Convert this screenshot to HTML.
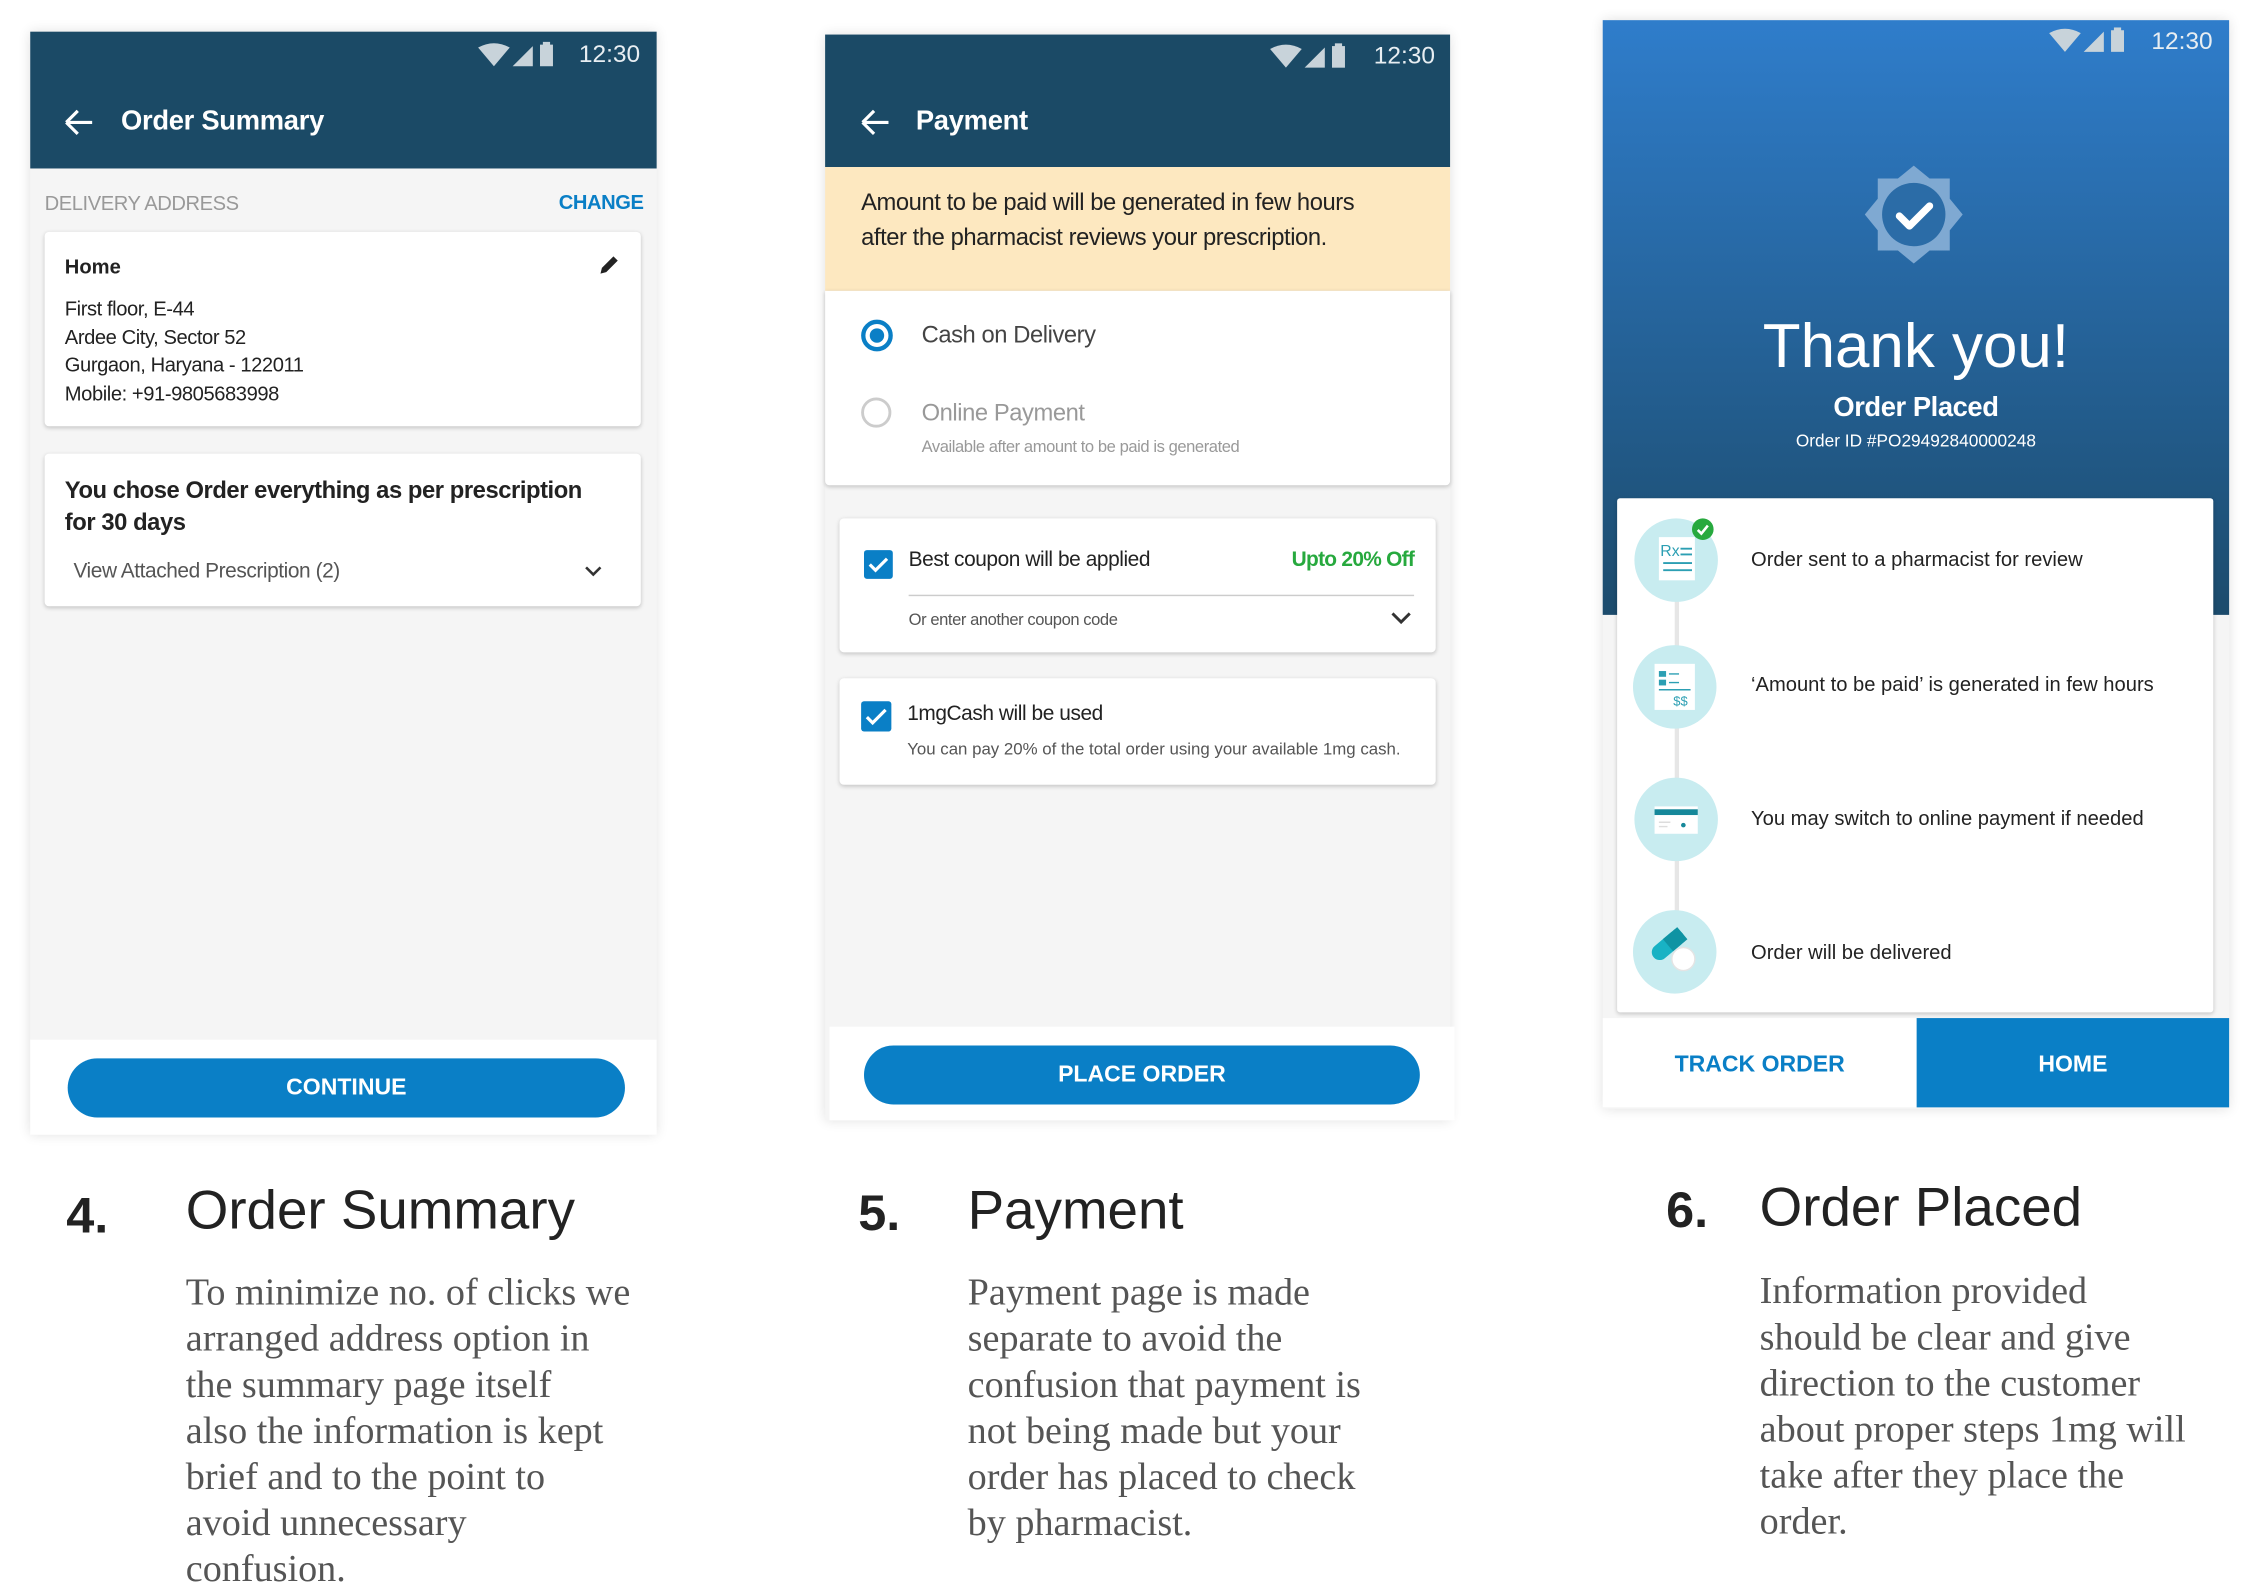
<!DOCTYPE html>
<html><head><meta charset="utf-8"><style>
html,body{margin:0;padding:0;background:#fff;}
body{width:2258px;height:1584px;overflow:hidden;position:relative;}
#s{position:absolute;left:0;top:0;width:1568px;height:1100px;transform:scale(1.44);transform-origin:0 0;font-family:"Liberation Sans",sans-serif;}
.a{position:absolute;white-space:nowrap;}
.ph{position:absolute;background:#f5f5f5;box-shadow:0 0 8px rgba(0,0,0,.12);}
.card{position:absolute;background:#fff;border-radius:3px;box-shadow:0 1px 3px rgba(0,0,0,.2);}
.hd{position:absolute;left:0;right:0;top:0;background:#1b4a66;}
.time{position:absolute;color:#e8eef2;font-size:17px;}
.ttl{position:absolute;color:#fff;font-size:19px;font-weight:bold;letter-spacing:-0.2px;}
.btn{position:absolute;background:#0a7fc6;color:#fff;border-radius:22px;font-size:16px;font-weight:bold;text-align:center;}
.num{position:absolute;font-size:35px;font-weight:bold;color:#222;}
.h{position:absolute;font-size:38px;color:#222;}
.p{position:absolute;font-family:"Liberation Serif",serif;font-size:26.5px;line-height:32px;color:#555;white-space:nowrap;}
.chk{position:absolute;width:20px;height:20px;background:#0a7fc6;border-radius:2px;}
.ic{position:absolute;width:58px;height:58px;border-radius:50%;background:#c8ecf0;}
.st{position:absolute;font-size:14px;color:#222;white-space:nowrap;}
.n{letter-spacing:-0.3px;}
</style></head><body><div id="s">

<svg width="0" height="0" style="position:absolute"><defs>
<g id="sb"><path d="M0 3 Q11 -3 22 3 L11 16Z" fill="#c8d3da"/><path d="M24 16 L38 2 L38 16Z" fill="#c8d3da"/><rect x="43" y="1" width="9" height="15" fill="#c8d3da"/><rect x="45" y="-1" width="5" height="3" fill="#c8d3da"/></g>
<g id="back"><path d="M2 10 H20 M2 10 L10 2 M2 10 L10 18" stroke="#fff" stroke-width="2.2" fill="none"/></g>
</defs></svg>

<!-- Panel 1 -->
<div class="ph" style="left:21px;top:22px;width:435px;height:766px;">
 <div class="hd" style="height:95px;">
  <svg class="a" style="left:311px;top:7px" width="60" height="18"><use href="#sb" y="1"/></svg>
  <div class="time" style="left:381px;top:6px;">12:30</div>
  <svg class="a" style="left:23px;top:53px" width="22" height="20"><use href="#back"/></svg>
  <div class="ttl" style="left:63px;top:52px;">Order Summary</div>
 </div>
 <div class="a n" style="left:10px;top:111px;font-size:14px;color:#999;">DELIVERY ADDRESS</div>
 <div class="a n" style="left:367px;top:110px;font-size:14px;color:#0a7fc6;font-weight:bold;">CHANGE</div>
 <div class="card" style="left:10px;top:139px;width:414px;height:135px;">
  <div class="a" style="left:14px;top:16px;font-size:14px;font-weight:bold;color:#222;">Home</div>
  <svg class="a" style="left:384px;top:15px" width="16" height="16"><path d="M2 14 L3 10 L11 2 L14 5 L6 13Z" fill="#222"/></svg>
  <div class="a n" style="left:14px;top:44px;font-size:14px;line-height:19.5px;color:#222;">First floor, E-44<br>Ardee City, Sector 52<br>Gurgaon, Haryana - 122011<br>Mobile: +91-9805683998</div>
 </div>
 <div class="card" style="left:10px;top:293px;width:414px;height:106px;">
  <div class="a n" style="left:14px;top:15px;font-size:16.5px;line-height:22px;font-weight:bold;color:#222;">You chose Order everything as per prescription<br>for 30 days</div>
  <div class="a n" style="left:20px;top:74px;font-size:14.5px;color:#555;">View Attached Prescription (2)</div>
  <svg class="a" style="left:374px;top:77px" width="14" height="10"><path d="M2 2 L7 7 L12 2" stroke="#333" stroke-width="1.8" fill="none"/></svg>
 </div>
 <div class="a" style="left:0;top:700px;width:435px;height:66px;background:#fff;"></div>
 <div class="btn" style="left:26px;top:713px;width:387px;height:41px;line-height:41px;">CONTINUE</div>
</div>

<!-- Panel 2 -->
<div class="ph" style="left:573px;top:24px;width:434px;height:754px;">
 <div class="hd" style="height:92px;">
  <svg class="a" style="left:309px;top:6px" width="60" height="18"><use href="#sb" y="1"/></svg>
  <div class="time" style="left:381px;top:5px;">12:30</div>
  <svg class="a" style="left:24px;top:51px" width="22" height="20"><use href="#back"/></svg>
  <div class="ttl" style="left:63px;top:50px;">Payment</div>
 </div>
 <div class="a" style="left:0;top:92px;width:434px;height:86px;background:#fde8c0;"></div>
 <div class="a n" style="left:25px;top:105px;font-size:16.5px;line-height:24px;color:#222;">Amount to be paid will be generated in few hours<br>after the pharmacist reviews your prescription.</div>
 <div class="a" style="left:0;top:178px;width:434px;height:135px;background:#fff;box-shadow:0 1px 3px rgba(0,0,0,.2);border-radius:0 0 3px 3px;"></div>
 <div class="a" style="left:25px;top:198px;width:16px;height:16px;border:3px solid #0a7fc6;border-radius:50%;"></div>
 <div class="a" style="left:31px;top:204px;width:10px;height:10px;background:#0a7fc6;border-radius:50%;"></div>
 <div class="a n" style="left:67px;top:200px;font-size:16.5px;color:#444;">Cash on Delivery</div>
 <div class="a" style="left:25px;top:252px;width:17px;height:17px;border:2px solid #ccc;border-radius:50%;"></div>
 <div class="a n" style="left:67px;top:254px;font-size:16.5px;color:#999;">Online Payment</div>
 <div class="a n" style="left:67px;top:281px;font-size:11.5px;color:#999;">Available after amount to be paid is generated</div>
 <div class="card" style="left:10px;top:336px;width:414px;height:93px;">
  <div class="chk" style="left:17px;top:22px;"><svg width="20" height="20"><path d="M4 10 L8 14 L16 6" stroke="#fff" stroke-width="2.2" fill="none"/></svg></div>
  <div class="a n" style="left:48px;top:21px;font-size:14.5px;color:#222;">Best coupon will be applied</div>
  <div class="a n" style="left:314px;top:21px;font-size:14.5px;color:#27a93e;font-weight:bold;letter-spacing:-0.5px;">Upto 20% Off</div>
  <div class="a" style="left:48px;top:53px;width:351px;height:1px;background:#ccc;"></div>
  <div class="a n" style="left:48px;top:65px;font-size:11.5px;color:#555;">Or enter another coupon code</div>
  <svg class="a" style="left:382px;top:64px" width="16" height="12"><path d="M2 2 L8 8 L14 2" stroke="#333" stroke-width="2" fill="none"/></svg>
 </div>
 <div class="card" style="left:10px;top:447px;width:414px;height:74px;">
  <div class="chk" style="left:15px;top:16px;width:21px;height:21px;"><svg width="21" height="21"><path d="M4 11 L8 15 L17 6" stroke="#fff" stroke-width="2.2" fill="none"/></svg></div>
  <div class="a n" style="left:47px;top:17px;font-size:14.5px;color:#222;">1mgCash will be used</div>
  <div class="a" style="left:47px;top:43px;font-size:11.7px;color:#555;">You can pay 20% of the total order using your available 1mg cash.</div>
 </div>
 <div class="a" style="left:3px;top:689px;width:434px;height:65px;background:#fff;"></div>
 <div class="btn" style="left:27px;top:702px;width:386px;height:41px;line-height:41px;">PLACE ORDER</div>
</div>

<!-- Panel 3 -->
<div class="ph" style="left:1113px;top:14px;width:435px;height:756px;background:#f5f5f5;">
 <div class="a" style="left:0;top:0;width:435px;height:413px;background:linear-gradient(#2f7dcb,#1c4b6c);"></div>
 <svg class="a" style="left:310px;top:5px" width="60" height="18"><use href="#sb" y="1"/></svg>
 <div class="time" style="left:381px;top:5px;">12:30</div>
 <svg class="a" style="left:181px;top:100px" width="70" height="70" viewBox="0 0 70 70">
  <path d="M35 1 L46 10 L60 10 L60 24 L69 35 L60 46 L60 60 L46 60 L35 69 L24 60 L10 60 L10 46 L1 35 L10 24 L10 10 L24 10Z" fill="#7fa9d2"/>
  <circle cx="35" cy="35" r="22" fill="#2b6ca7"/>
  <path d="M25 36 L32 43 L46 29" stroke="#fff" stroke-width="5" fill="none" stroke-linecap="round" stroke-linejoin="round"/>
 </svg>
 <div class="a" style="left:0;width:435px;text-align:center;top:203px;font-size:43px;color:#fff;letter-spacing:0px;font-family:'DejaVu Sans ExtraLight','Liberation Sans',sans-serif;">Thank you!</div>
 <div class="a n" style="left:0;width:435px;text-align:center;top:259px;font-size:19px;color:#fff;font-weight:bold;">Order Placed</div>
 <div class="a" style="left:0;width:435px;text-align:center;top:285px;font-size:12px;color:#fff;">Order ID #PO29492840000248</div>
 <div class="card" style="left:10px;top:332px;width:414px;height:357px;border-radius:2px;">
  <div class="a" style="left:40px;top:60px;width:3px;height:270px;background:#e6e6e6;"></div>
  <div class="ic" style="left:12px;top:14px;"><svg width="58" height="58"><rect x="17" y="13" width="25" height="30" fill="#fff"/><text x="18" y="26" font-size="11" fill="#2c9fb3" font-family="Liberation Sans">Rx</text><path d="M32 21h8M32 25h8M20 31h20M20 36h20" stroke="#2c9fb3" stroke-width="1.3"/></svg></div>
  <div class="a" style="left:52px;top:14px;width:15px;height:15px;border-radius:50%;background:#27a93e;"><svg width="15" height="15"><path d="M4 8 L6.5 10.5 L11 5" stroke="#fff" stroke-width="1.8" fill="none"/></svg></div>
  <div class="st" style="left:93px;top:34px;">Order sent to a pharmacist for review</div>
  <div class="ic" style="left:11px;top:102px;"><svg width="58" height="58"><rect x="15" y="13" width="28" height="32" fill="#fff"/><rect x="18" y="18" width="5" height="4" fill="#2c9fb3"/><rect x="18" y="24" width="5" height="4" fill="#2c9fb3"/><path d="M25 20h7M25 26h7M18 31h22" stroke="#2c9fb3" stroke-width="1"/><text x="28" y="42" font-size="9" fill="#2c9fb3" font-family="Liberation Sans">$$</text></svg></div>
  <div class="st" style="left:93px;top:121px;">‘Amount to be paid’ is generated in few hours</div>
  <div class="ic" style="left:12px;top:194px;"><svg width="58" height="58"><rect x="14" y="20" width="30" height="19" fill="#fff"/><rect x="14" y="22" width="30" height="4" fill="#16889a"/><circle cx="34" cy="33" r="1.6" fill="#16889a"/><path d="M17 31h8M17 34h6" stroke="#ddd" stroke-width="1"/></svg></div>
  <div class="st" style="left:93px;top:214px;">You may switch to online payment if needed</div>
  <div class="ic" style="left:11px;top:286px;"><svg width="58" height="58"><circle cx="35" cy="34" r="8" fill="#fff" stroke="#e4e4e4" stroke-width="1"/><g transform="rotate(-40 24 24)"><rect x="11" y="19" width="26" height="11" rx="5.5" fill="#18b2c4"/><rect x="24" y="19" width="13" height="11" fill="#0f93a3"/><rect x="31" y="19" width="6" height="11" rx="5.5" fill="#0f93a3"/></g></svg></div>
  <div class="st" style="left:93px;top:307px;">Order will be delivered</div>
 </div>
 <div class="a" style="left:0;top:693px;width:218px;height:62px;background:#fff;color:#0a7fc6;font-size:16px;font-weight:bold;text-align:center;line-height:66px;">TRACK ORDER</div>
 <div class="a" style="left:218px;top:693px;width:217px;height:62px;background:#0a7fc6;color:#fff;font-size:16px;font-weight:bold;text-align:center;line-height:66px;">HOME</div>
</div>

<!-- Texts -->
<div class="num" style="left:46px;top:825px;">4.</div>
<div class="h" style="left:129px;top:820px;">Order Summary</div>
<div class="p" style="left:129px;top:881px;">To minimize no. of clicks we<br>arranged address option in<br>the summary page itself<br>also the information is kept<br>brief and to the point to<br>avoid unnecessary<br>confusion.</div>

<div class="num" style="left:596px;top:823px;">5.</div>
<div class="h" style="left:672px;top:820px;">Payment</div>
<div class="p" style="left:672px;top:881px;">Payment page is made<br>separate to avoid the<br>confusion that payment is<br>not being made but your<br>order has placed to check<br>by pharmacist.</div>

<div class="num" style="left:1157px;top:821px;">6.</div>
<div class="h" style="left:1222px;top:818px;">Order Placed</div>
<div class="p" style="left:1222px;top:880px;">Information provided<br>should be clear and give<br>direction to the customer<br>about proper steps 1mg will<br>take after they place the<br>order.</div>

</div></body></html>
